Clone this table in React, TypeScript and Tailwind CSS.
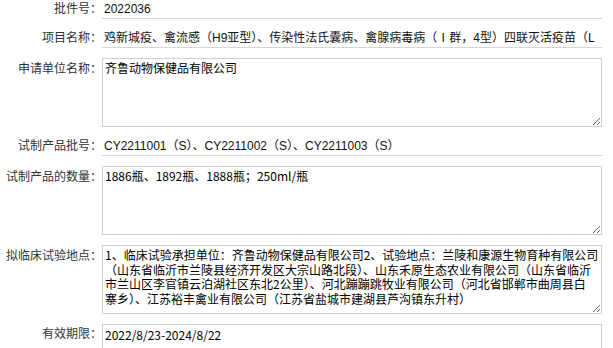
import React from "react";

const font = "font-['Liberation_Sans','Noto_Sans_CJK_SC',sans-serif]";
const labelCls = `w-[102px] shrink-0 text-right text-[12px] leading-[18px] text-[#333] whitespace-nowrap ${font}`;
const lineCls = `flex-1 min-w-0 h-[19px] border-b border-[#d6d6d6] pl-[2px] text-[12px] leading-[18px] text-[#111] whitespace-nowrap overflow-hidden ${font}`;
const taCls =
  "flex-1 min-w-0 h-[69px] border border-[#cfcfcf] bg-white px-[2px] py-[2px] text-[12px] leading-[14.5px] text-black overflow-hidden whitespace-pre font-['Noto_Sans_CJK_SC',sans-serif] outline-none";

function TextRow({ label, value }: { label: string; value: string }) {
  return (
    <div className="flex">
      <div className={labelCls}>{label}</div>
      <div className={lineCls}>{value}</div>
    </div>
  );
}

function AreaRow({ label, value }: { label: string; value: string }) {
  return (
    <div className="flex">
      <div className={`${labelCls} pt-[2px]`}>{label}</div>
      <textarea readOnly wrap="off" className={taCls} value={value} />
    </div>
  );
}

export default function App() {
  const site = [
    "1、临床试验承担单位：齐鲁动物保健品有限公司2、试验地点：兰陵和康源生物育种有限公司",
    "（山东省临沂市兰陵县经济开发区大宗山路北段）、山东禾原生态农业有限公司（山东省临沂",
    "市兰山区李官镇云泊湖社区东北2公里）、河北蹦蹦跳牧业有限公司（河北省邯郸市曲周县白",
    "寨乡）、江苏裕丰禽业有限公司（江苏省盐城市建湖县芦沟镇东升村）",
  ].join("\n");
  return (
    <div className="h-[348px] w-[613px] overflow-hidden bg-white">
      <div className="flex flex-col gap-[10px] pr-[11px]">
        <TextRow label="批件号：" value="2022036" />
        <TextRow
          label="项目名称："
          value="鸡新城疫、禽流感（H9亚型）、传染性法氏囊病、禽腺病毒病（Ⅰ群，4型）四联灭活疫苗（L"
        />
        <AreaRow label="申请单位名称：" value="齐鲁动物保健品有限公司" />
        <TextRow label="试制产品批号：" value="CY2211001（S）、CY2211002（S）、CY2211003（S）" />
        <AreaRow label="试制产品的数量：" value="1886瓶、1892瓶、1888瓶；250ml/瓶" />
        <AreaRow label="拟临床试验地点：" value={site} />
        <div className="flex">
          <div className={`${labelCls} pt-[1px]`}>有效期限：</div>
          <div className="flex-1 min-w-0 h-[26px] border border-[#cfcfcf] pl-[2px] pt-[1px] text-[12px] leading-[18px] text-black font-['Noto_Sans_CJK_SC',sans-serif]">
            2022/8/23-2024/8/22
          </div>
        </div>
      </div>
    </div>
  );
}
